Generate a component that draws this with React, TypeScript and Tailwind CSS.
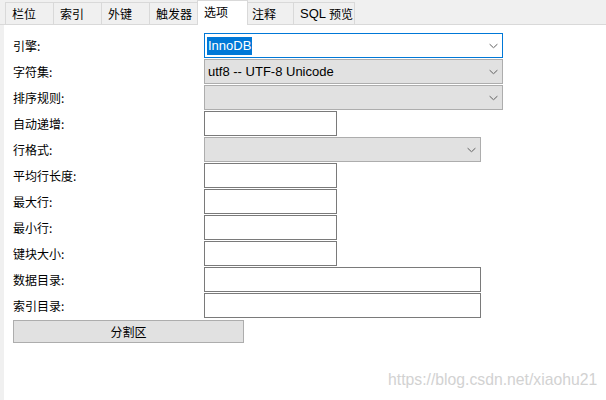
import React from "react";

const CJK = "font-['Noto_Sans_CJK_SC','Liberation_Sans',sans-serif]";
const LAT = "font-['Liberation_Sans','Noto_Sans_CJK_SC',sans-serif]";

function Chevron() {
  return (
    <svg width="9" height="5" viewBox="0 0 9 5" className="absolute right-[4px] top-1/2 -translate-y-1/2">
      <path d="M0.5 0.5 L4.5 4.3 L8.5 0.5" fill="none" stroke="#606060" strokeWidth="1" />
    </svg>
  );
}

function Label({ text }: { text: string }) {
  return (
    <div className={"w-[191px] shrink-0 text-[12px] text-black leading-none flex items-center " + CJK}>
      {text}
    </div>
  );
}

function SelectBox({ w, value, focused }: { w: string; value?: string; focused?: boolean }) {
  return (
    <div
      className={
        "relative h-[25px] flex items-center " +
        w +
        (focused ? " border border-[#0078d7] bg-white" : " border border-[#adadad] bg-[#e1e1e1]")
      }
    >
      {focused ? (
        <span className={"ml-[2px] bg-[#0078d7] text-white text-[13px] leading-[18px] px-px " + LAT}>InnoDB</span>
      ) : value ? (
        <span className={"ml-[3px] text-black text-[13px] leading-none " + LAT}>{value}</span>
      ) : null}
      <Chevron />
    </div>
  );
}

function TextBox({ w }: { w: string }) {
  return <div className={"h-[25px] border border-[#7a7a7a] bg-white " + w} />;
}

export default function App() {
  const rows: { label: string; field: React.ReactNode }[] = [
    { label: "引擎:", field: <SelectBox w="w-[299px]" focused /> },
    { label: "字符集:", field: <SelectBox w="w-[299px]" value="utf8 -- UTF-8 Unicode" /> },
    { label: "排序规则:", field: <SelectBox w="w-[299px]" /> },
    { label: "自动递增:", field: <TextBox w="w-[133px]" /> },
    { label: "行格式:", field: <SelectBox w="w-[277px]" /> },
    { label: "平均行长度:", field: <TextBox w="w-[133px]" /> },
    { label: "最大行:", field: <TextBox w="w-[133px]" /> },
    { label: "最小行:", field: <TextBox w="w-[133px]" /> },
    { label: "键块大小:", field: <TextBox w="w-[133px]" /> },
    { label: "数据目录:", field: <TextBox w="w-[277px]" /> },
    { label: "索引目录:", field: <TextBox w="w-[277px]" /> },
  ];

  const tabBase =
    "h-[22px] shrink-0 whitespace-nowrap bg-[#f0f0f0] border-t border-[#d9d9d9] flex items-center text-[12px] text-black " +
    CJK;

  return (
    <div className="relative w-[606px] h-[400px] bg-[#f0f0f0] overflow-hidden flex flex-col">
      {/* tab strip */}
      <div className="h-[25px] shrink-0 border-b border-[#d9d9d9] flex items-end pl-[5px]">
        <div className={tabBase + " w-[48px] border-l pl-[6px]"}>栏位</div>
        <div className={tabBase + " w-[48px] border-l pl-[6px]"}>索引</div>
        <div className={tabBase + " w-[48px] border-l pl-[6px]"}>外键</div>
        <div className={tabBase + " w-[48px] border-l pl-[6px]"}>触发器</div>
        <div
          className={
            "relative z-10 shrink-0 h-[25px] mb-[-1px] w-[51px] bg-white border-t border-l border-r border-[#d9d9d9] pl-[6px] pb-[3px] flex items-center text-[12px] text-black " +
            CJK
          }
        >
          选项
        </div>
        <div className={tabBase + " w-[45px] pl-[4px]"}>注释</div>
        <div className={tabBase + " w-[62px] border-l border-r pl-[6px]"}>
          <span className={"text-[13px] " + LAT}>SQL</span>
          <span className="ml-[3px] text-[12px]">预览</span>
        </div>
      </div>

      {/* body */}
      <div className="flex-1 ml-[4px] bg-white pt-[8px] pl-[9px] flex flex-col gap-px">
        {rows.map((r) => (
          <div key={r.label} className="flex h-[25px]">
            <Label text={r.label} />
            {r.field}
          </div>
        ))}
        <button
          className={
            "mt-[1px] w-[231px] h-[23px] bg-[#e1e1e1] border border-[#adadad] text-[12px] text-black flex items-center justify-center " +
            CJK
          }
        >
          分割区
        </button>
      </div>

      {/* watermark */}
      <div
        className={
          "absolute left-[388px] top-[372px] text-[15.75px] text-[#d2d2d2] leading-none whitespace-nowrap " + LAT
        }
      >
        https://blog.csdn.net/xiaohu21
      </div>
    </div>
  );
}
